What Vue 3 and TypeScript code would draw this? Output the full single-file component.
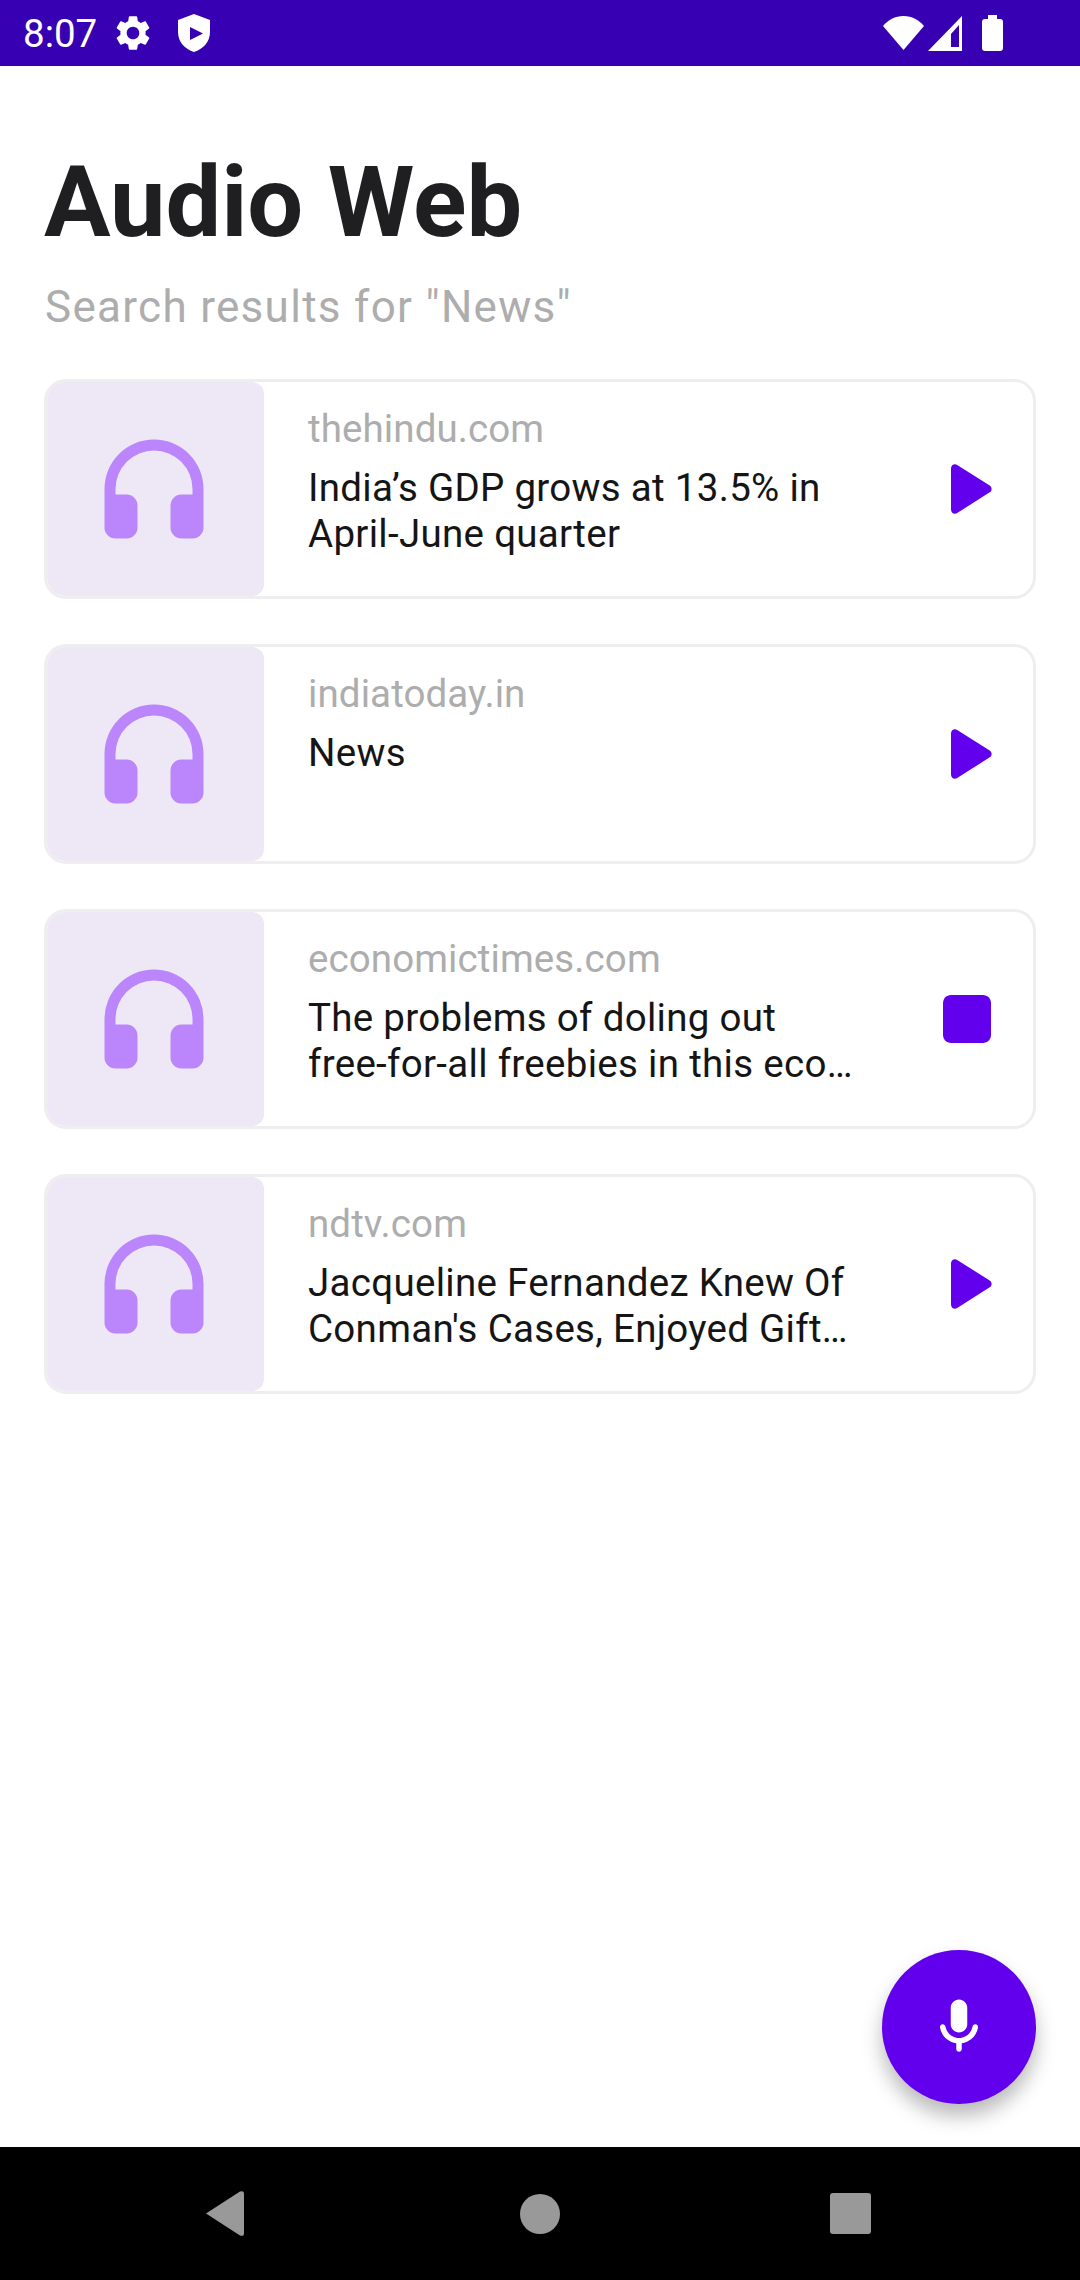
<script setup lang="ts">
interface Item { source: string; lines: string[]; playing: boolean }
const items: Item[] = [
  { source: 'thehindu.com', lines: ['India’s GDP grows at 13.5% in', 'April-June quarter'], playing: false },
  { source: 'indiatoday.in', lines: ['News'], playing: false },
  { source: 'economictimes.com', lines: ['The problems of doling out', 'free-for-all freebies in this eco…'], playing: true },
  { source: 'ndtv.com', lines: ['Jacqueline Fernandez Knew Of', "Conman's Cases, Enjoyed Gift…"], playing: false },
]
</script>

<template>
  <div class="screen">
    <header class="status">
      <span class="time">8:07</span>
      <svg class="gear" viewBox="0 0 24 24"><path d="M19.14 12.94c.04-.3.06-.61.06-.94 0-.32-.02-.64-.07-.94l2.03-1.58c.18-.14.23-.41.12-.61l-1.92-3.32c-.12-.22-.37-.29-.59-.22l-2.39.96c-.5-.38-1.03-.7-1.62-.94l-.36-2.54c-.04-.24-.24-.41-.48-.41h-3.84c-.24 0-.43.17-.47.41l-.36 2.54c-.59.24-1.13.57-1.62.94l-2.39-.96c-.22-.08-.47 0-.59.22L2.74 8.87c-.12.21-.08.47.12.61l2.03 1.58c-.05.3-.09.63-.09.94s.02.64.07.94l-2.03 1.58c-.18.14-.23.41-.12.61l1.92 3.32c.12.22.37.29.59.22l2.39-.96c.5.38 1.03.7 1.62.94l.36 2.54c.05.24.24.41.48.41h3.84c.24 0 .44-.17.47-.41l.36-2.54c.59-.24 1.13-.56 1.62-.94l2.39.96c.22.08.47 0 .59-.22l1.92-3.32c.12-.22.07-.47-.12-.61l-2.01-1.58zM12 15.6c-1.98 0-3.6-1.62-3.6-3.6s1.62-3.6 3.6-3.6 3.6 1.62 3.6 3.6-1.62 3.6-3.6 3.6z" /></svg>
      <svg class="shield" viewBox="0 0 32 38"><path fill-rule="evenodd" d="M16 0 32 6V18C32 28 25 35 16 38 7 35 0 28 0 18V6ZM12 13V26L25 19.500Z" /></svg>
      <span class="spacer"></span>
      <svg class="wifi" viewBox="0 0 41 34"><path d="M0 10C5 4 12 0 20.500 0S36 4 41 10L20.500 34Z" /></svg>
      <svg class="signal" viewBox="0 0 34 35"><path fill-rule="evenodd" d="M34 0V35H0ZM31 9 23 18V31H31Z" /></svg>
      <span class="battery"><i class="nub"></i><i class="cell"></i></span>
    </header>

    <main class="content">
      <h1 class="heading">Audio Web</h1>
      <p class="sub">Search results for "News"</p>
      <ul class="list">
        <li v-for="item in items" :key="item.source" class="card">
          <div class="thumb">
            <svg class="phones" viewBox="0 0 24 24"><path d="M12 3a9 9 0 0 0-9 9v7a2 2 0 0 0 2 2h2a2 2 0 0 0 2-2v-4a2 2 0 0 0-2-2H5v-1a7 7 0 0 1 14 0v1h-2a2 2 0 0 0-2 2v4a2 2 0 0 0 2 2h2a2 2 0 0 0 2-2v-7a9 9 0 0 0-9-9z" /></svg>
          </div>
          <div class="body">
            <div class="source">{{ item.source }}</div>
            <div class="title">
              <div v-for="line in item.lines" :key="line" class="line">{{ line }}</div>
            </div>
          </div>
          <svg class="action" viewBox="0 0 24 24">
            <path v-if="item.playing" d="M8 6h8c1.100 0 2 .9 2 2v8c0 1.100-.9 2-2 2H8c-1.100 0-2-.9-2-2V8c0-1.100.9-2 2-2z" />
            <path v-else d="M8 6.820v10.360c0 .79.87 1.270 1.540.84l8.140-5.180c.62-.39.62-1.290 0-1.690L9.540 5.980C8.870 5.550 8 6.030 8 6.820z" />
          </svg>
        </li>
      </ul>
      <button class="fab" type="button" aria-label="Speak">
        <svg viewBox="0 0 24 24"><path d="M12 14c1.660 0 3-1.340 3-3V5c0-1.660-1.340-3-3-3S9 3.340 9 5v6c0 1.660 1.340 3 3 3zm5.910-3c-.49 0-.9.36-.98.85C16.520 14.200 14.470 16 12 16s-4.520-1.800-4.930-4.150c-.08-.49-.49-.85-.98-.85-.61 0-1.090.54-1 1.140.49 3 2.890 5.350 5.910 5.780V20c0 .55.45 1 1 1s1-.45 1-1v-2.080c3.020-.43 5.420-2.780 5.910-5.780.1-.6-.39-1.140-1-1.140z" /></svg>
      </button>
    </main>

    <footer class="nav">
      <svg class="back" viewBox="0 0 38 45"><path d="M0 22.500 34 .6Q38-1 38 3V42Q38 46 34 44.400Z" /></svg>
      <span class="home"></span>
      <span class="recent"></span>
    </footer>
  </div>
</template>

<style>
html, body { margin: 0; background: #fff; }
</style>

<style scoped>
.screen {
  width: 1080px;
  height: 2280px;
  display: flex;
  flex-direction: column;
  font-family: Roboto, "Liberation Sans", sans-serif;
  background: #fff;
  overflow: hidden;
}
.status {
  height: 66px;
  flex: none;
  background: #3700b3;
  display: flex;
  align-items: center;
  padding: 0 77px 0 23px;
  color: #fff;
}
.status svg { fill: #fff; display: block; flex: none; }
.time { font-size: 38.500px; width: 73px; }
.gear { width: 42px; height: 42px; margin-left: 16px; }
.shield { width: 32px; height: 38px; margin-left: 24px; }
.spacer { flex: 1; }
.wifi { width: 41px; height: 34px; margin-bottom: 1px; }
.signal { width: 34px; height: 35px; margin-left: 4px; }
.battery { width: 21px; height: 36px; margin-left: 20px; display: flex; flex-direction: column; align-items: center; }
.nub { display: block; width: 9px; height: 4px; background: #fff; }
.cell { display: block; width: 21px; flex: 1; background: #fff; border-radius: 3px; }

.content { flex: 1; position: relative; padding: 0 44px; }
.heading {
  margin: 72px 0 0;
  font-size: 99px;
  line-height: 129px;
  font-weight: 700;
  color: #1f1f21;
}
.sub {
  margin: 14px 0 0 1px;
  font-size: 44px;
  line-height: 52px;
  letter-spacing: 1.300px;
  color: #adadad;
}
.list { list-style: none; margin: 46px 0 0; padding: 0; display: flex; flex-direction: column; gap: 45px; }
.card {
  box-sizing: border-box;
  height: 220px;
  border: 3px solid #eee;
  border-radius: 22px;
  display: flex;
  align-items: stretch;
  overflow: hidden;
}
.thumb {
  width: 217px;
  flex: none;
  box-sizing: border-box;
  padding-right: 4px;
  background: #ede7f6;
  border-radius: 12px;
  display: flex;
  align-items: center;
  justify-content: center;
}
.phones { width: 132px; height: 132px; fill: #bb86fc; }
.body { flex: 1; min-width: 0; padding: 24px 44px 0 44px; }
.source { font-size: 38.500px; line-height: 45px; letter-spacing: .1px; color: #adadad; }
.title {
  margin-top: 14px;
  font-size: 38.500px;
  line-height: 46px;
  letter-spacing: .3px;
  color: #151515;
}
.line { white-space: nowrap; }
.action { width: 96px; height: 96px; flex: none; align-self: center; margin-right: 18px; fill: #6200ee; }
.fab {
  position: absolute;
  right: 44px;
  top: 1884px;
  width: 154px;
  height: 154px;
  border: 0;
  padding: 0;
  border-radius: 50%;
  background: #6200ee;
  box-shadow: 0 12px 20px rgba(0, 0, 0, .28);
  display: flex;
  align-items: center;
  justify-content: center;
}
.fab svg { width: 66px; height: 66px; fill: #fff; }
.nav {
  height: 133px;
  flex: none;
  background: #000;
  display: flex;
  align-items: center;
  padding-left: 206px;
}
.back { width: 38px; height: 45px; fill: #999; }
.home { width: 40px; height: 40px; margin-left: 276px; border-radius: 50%; background: #999; }
.recent { width: 41px; height: 41px; margin-left: 270px; border-radius: 3px; background: #999; }
</style>
